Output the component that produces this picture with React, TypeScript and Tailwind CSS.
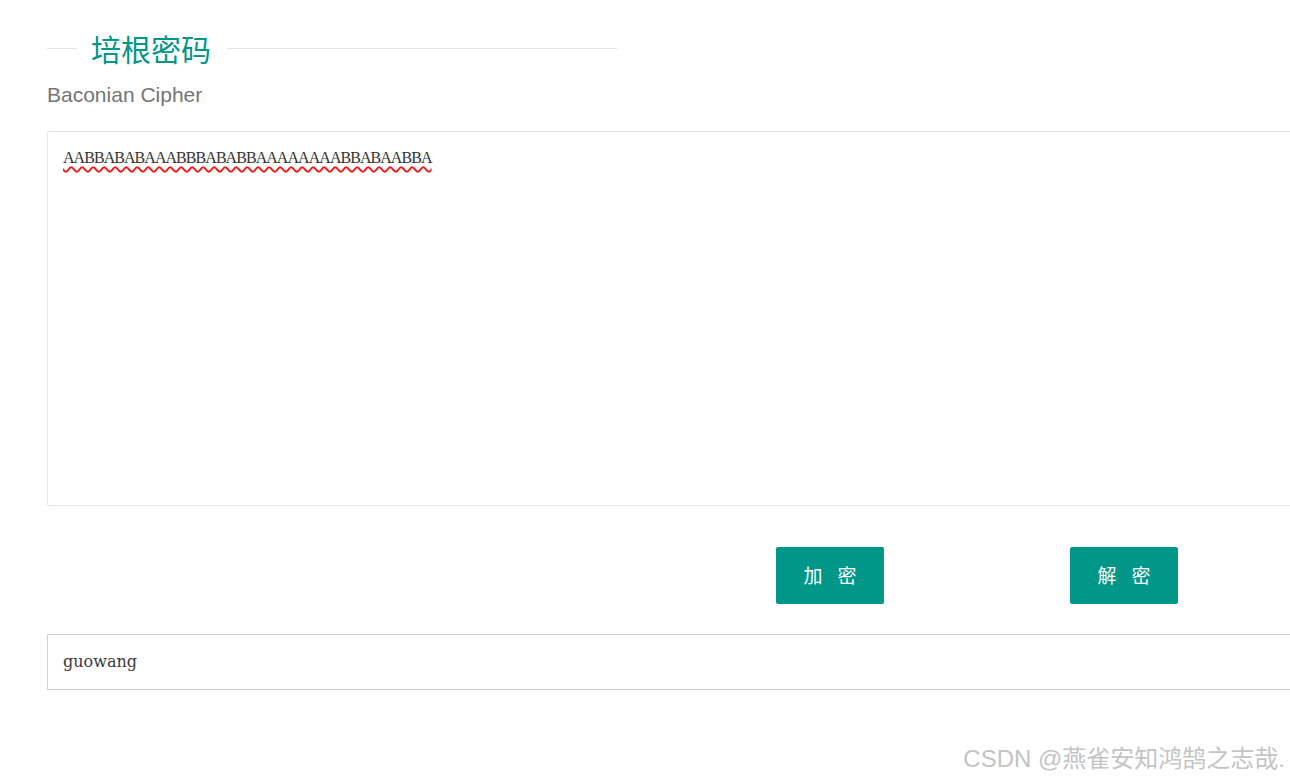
import React from "react";

export default function App() {
  return (
    <div className="relative w-[1290px] h-[780px] overflow-hidden bg-white">
      <div className="pl-[47px] pt-[28px]">
        <div className="flex items-center w-[570px] h-[40px]">
          <div className="w-[30px] h-px bg-[#e6e6e6]" />
          <div
            className="pl-[14px] pr-[16px] text-[30px] leading-[40px] text-[#009688]"
            style={{ fontFamily: '"Noto Sans CJK SC", sans-serif' }}
          >
            培根密码
          </div>
          <div className="flex-1 h-px bg-[#e6e6e6]" />
        </div>
        <div
          className="mt-[15px] text-[21px] leading-[24px] text-[#757575]"
          style={{ fontFamily: '"Liberation Sans", Arial, sans-serif' }}
        >
          Baconian Cipher
        </div>
        <div className="mt-[24px] w-[1300px] h-[375px] border border-[#e6e6e6] rounded-[2px] pl-[15px] pt-[13px]">
          <span
            className="text-[16px] leading-[20px] text-[#333] tracking-[-0.95px] underline decoration-wavy decoration-[#f01818] decoration-[1.5px] underline-offset-[3px]"
            style={{ fontFamily: '"Liberation Serif", serif' }}
          >
            AABBABABAAABBBABABBAAAAAAAABBABAABBA
          </span>
        </div>
        <div className="mt-[41px] flex pl-[729px] gap-[186px]">
          <button className="w-[108px] h-[57px] rounded-[2px] bg-[#009688] text-white flex items-center justify-center gap-[15px] text-[19px]" style={{ fontFamily: '"Noto Sans CJK SC", sans-serif' }}>
            <span>加</span>
            <span>密</span>
          </button>
          <button className="w-[108px] h-[57px] rounded-[2px] bg-[#009688] text-white flex items-center justify-center gap-[15px] text-[19px]" style={{ fontFamily: '"Noto Sans CJK SC", sans-serif' }}>
            <span>解</span>
            <span>密</span>
          </button>
        </div>
        <div className="mt-[30px] w-[1300px] h-[56px] border border-[#d2d2d2] flex items-center pl-[15px]">
          <span
            className="text-[16px] text-[#3a3a3a]"
            style={{ fontFamily: '"DejaVu Serif", serif' }}
          >
            guowang
          </span>
        </div>
      </div>
      <div
        className="absolute right-[5px] top-[744px] text-[24px] leading-[30px] text-[#c4c4c4] whitespace-nowrap"
        style={{ fontFamily: '"Liberation Sans", "Noto Sans CJK SC", sans-serif', textShadow: "0 0 1px rgba(255,255,255,0.8)" }}
      >
        CSDN @燕雀安知鸿鹄之志哉.
      </div>
    </div>
  );
}
